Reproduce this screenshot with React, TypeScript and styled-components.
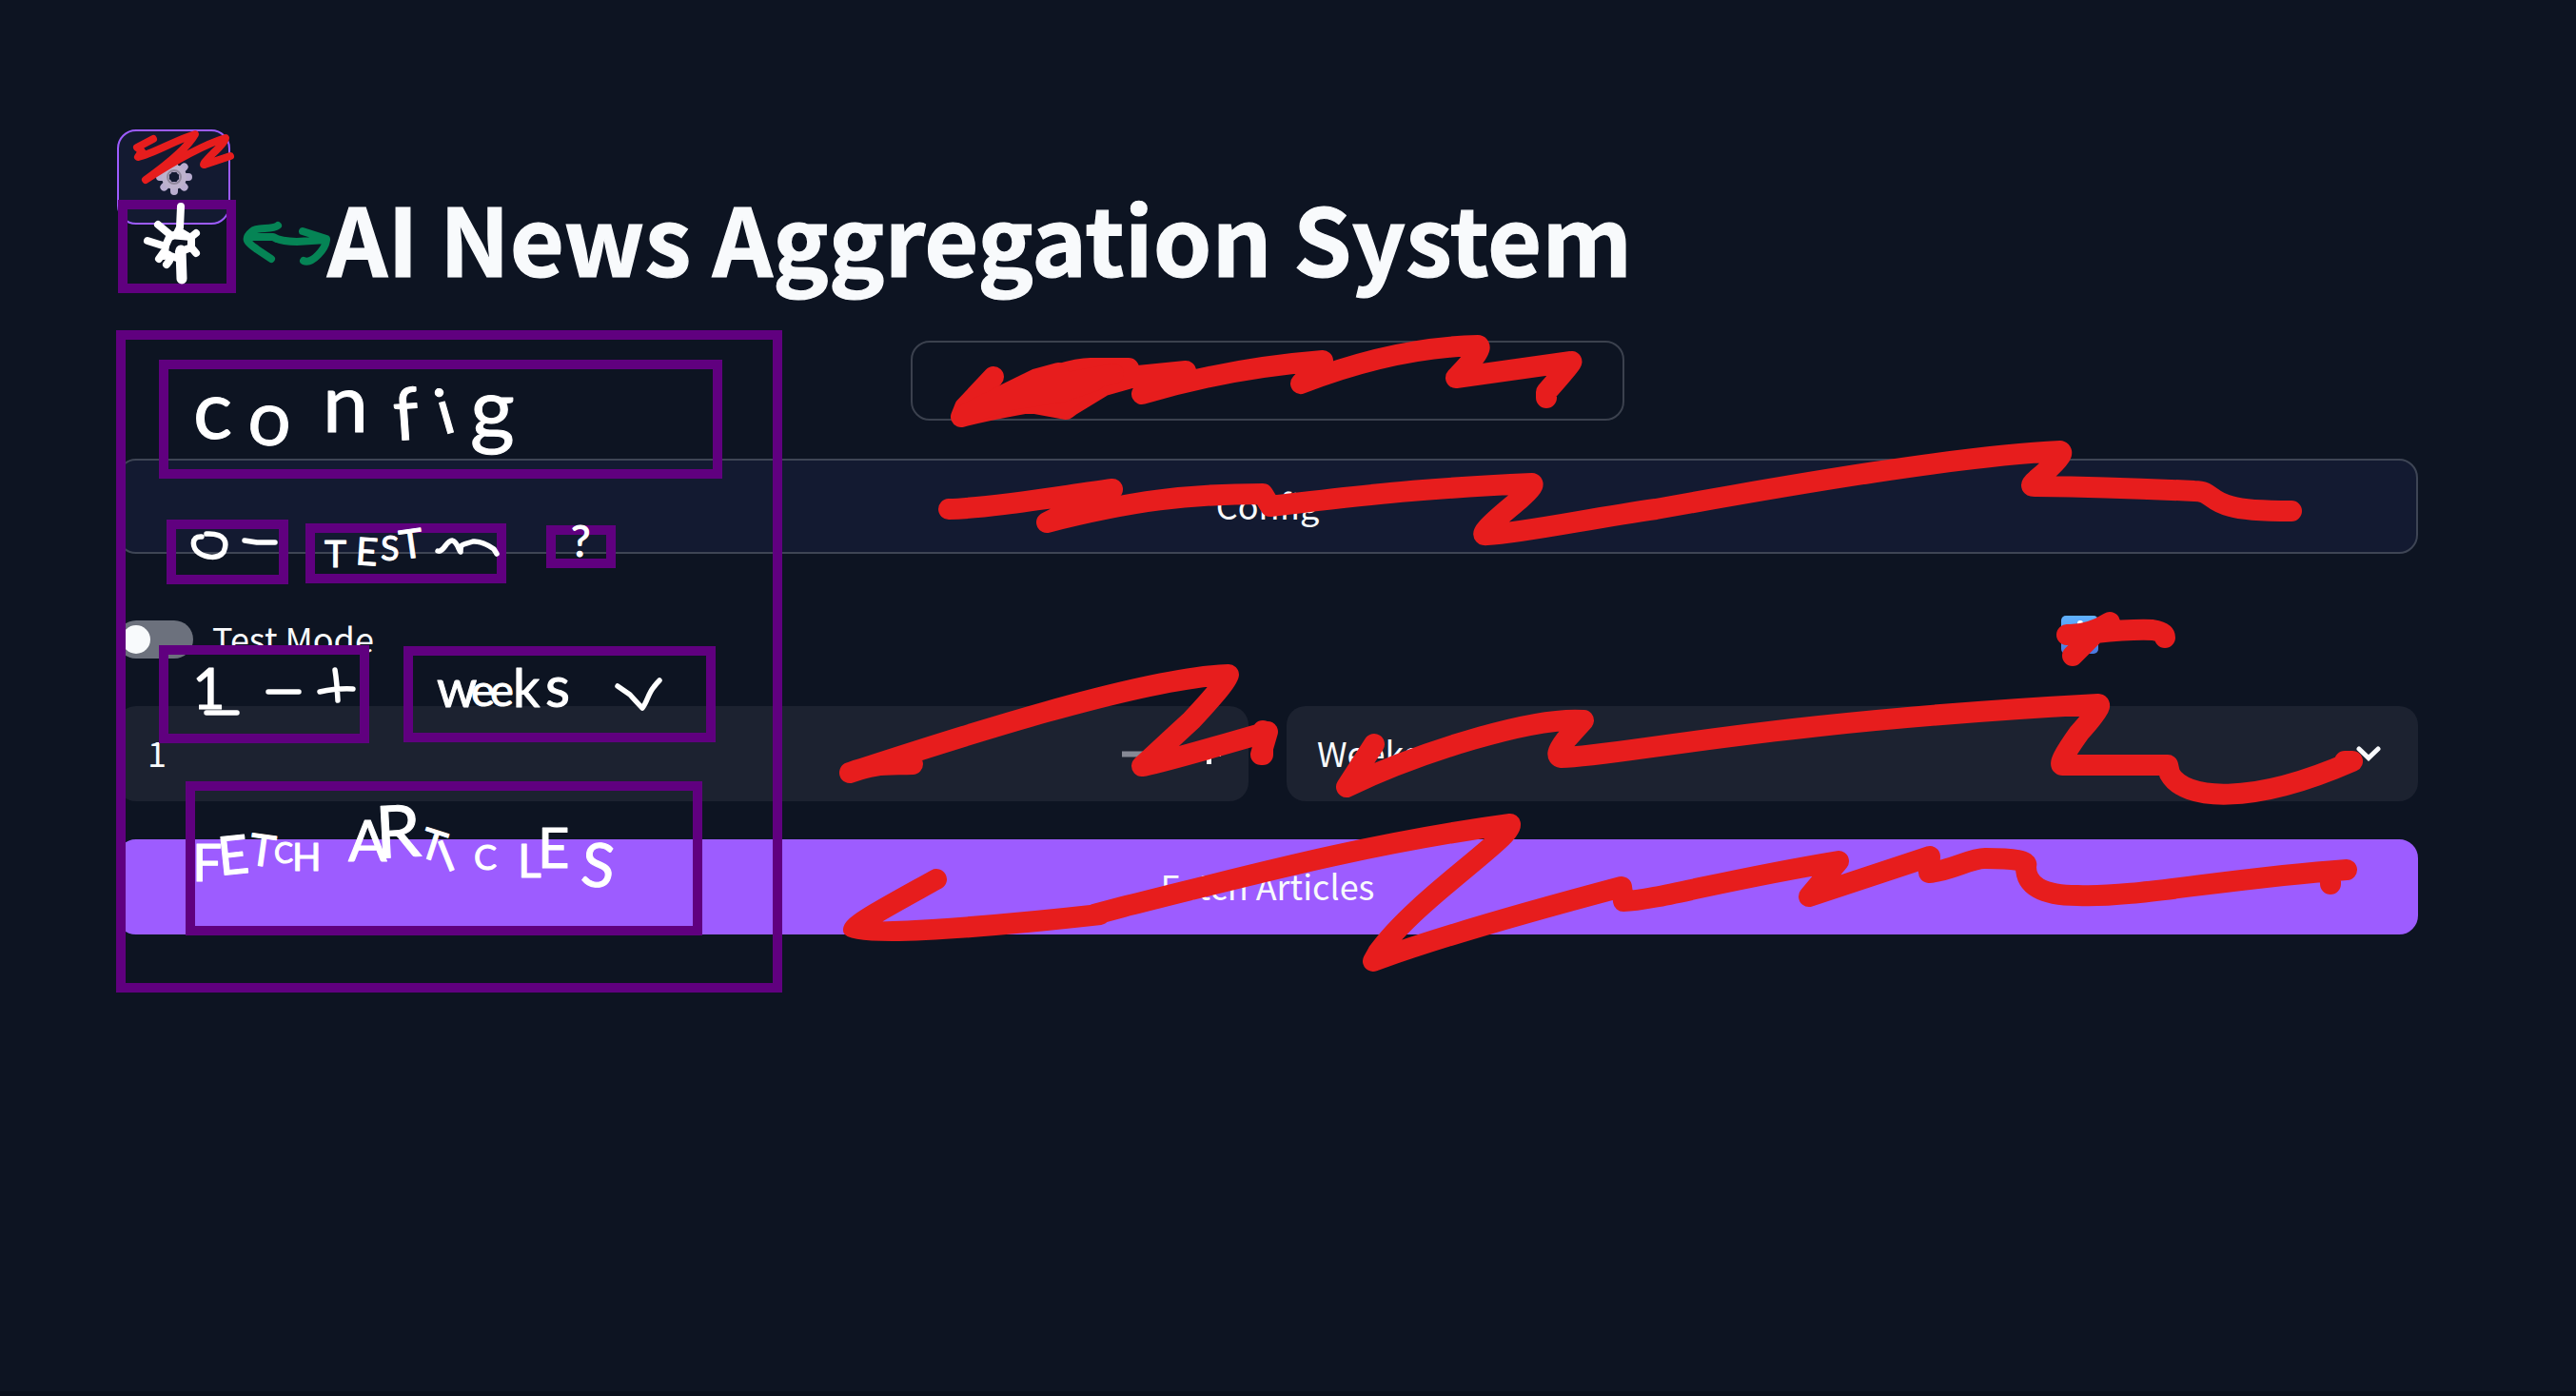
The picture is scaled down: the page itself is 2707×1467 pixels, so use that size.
import React from "react";
import styled, { createGlobalStyle } from "styled-components";

const colors = {
  page: "#0d1422",
  surface: "#131a31",
  field: "#1c2230",
  line: "#3e4555",
  accent: "#9d5cff",
  text: "#f8fafc",
  frame: "#60007f",
  red: "#e71d1d",
  green: "#058455",
};

const GlobalStyle = createGlobalStyle`
  * { box-sizing: border-box; }
  body {
    margin: 0;
    background: ${colors.page};
    color: ${colors.text};
    font-family: "Noto Sans CJK JP", "Noto Sans CJK SC", "Open Sans", sans-serif;
    font-size: 36px;
  }
`;

const Page = styled.main`
  position: relative;
  width: 2707px;
  height: 1467px;
  overflow: hidden;
  padding: 136px 166px 0 123px;
  background: ${colors.page};
  border-bottom: 5px solid #090f1b;
`;

const Header = styled.header`
  display: flex;
  align-items: flex-start;
  gap: 102px;
  height: 182px;
`;

const GearButton = styled.button`
  display: flex;
  align-items: center;
  justify-content: center;
  width: 119px;
  height: 100px;
  padding: 0;
  border: 2px solid ${colors.accent};
  border-radius: 20px;
  background: ${colors.surface};
`;

const Title = styled.h1`
  margin: 46px 0 0;
  font-size: 98.5px;
  font-weight: 700;
  line-height: 132px;
  white-space: nowrap;
  -webkit-text-stroke: 1.2px ${colors.text};
`;

const Stack = styled.section`
  display: flex;
  flex-direction: column;
  gap: 40px;
  margin-top: 40px;
`;

const Outline = styled.div`
  width: 750px;
  height: 84px;
  margin-left: 834px;
  border: 2px solid #3b414e;
  border-radius: 20px;
`;

const WideButton = styled.button<{ $primary?: boolean }>`
  display: flex;
  align-items: center;
  justify-content: center;
  width: 100%;
  height: 100px;
  padding: 0 0 4px;
  border: 2px solid ${(p) => (p.$primary ? colors.accent : colors.line)};
  border-radius: 20px;
  background: ${(p) => (p.$primary ? colors.accent : colors.surface)};
  color: ${colors.text};
  font: inherit;
  line-height: 50px;
`;

const ToggleRow = styled.div`
  display: flex;
  align-items: center;
  height: 80px;
`;

const Switch = styled.span`
  display: flex;
  align-items: center;
  width: 80px;
  height: 40px;
  padding: 0 5px;
  border-radius: 20px;
  background: #6c717d;
`;

const Knob = styled.span`
  width: 30px;
  height: 30px;
  border-radius: 50%;
  background: ${colors.text};
`;

const ToggleLabel = styled.span`
  margin-left: 20px;
  padding-bottom: 4px;
  line-height: 50px;
`;

const InfoTile = styled.span`
  display: flex;
  justify-content: center;
  width: 39px;
  height: 40px;
  margin: -10px 336px 0 auto;
  border-radius: 5px;
  background: linear-gradient(#60b2ff, #4b78df);
`;

const FieldRow = styled.div`
  display: grid;
  grid-template-columns: 1fr 1fr;
  gap: 40px;
`;

const Field = styled.div<{ $inset: number; $end: number }>`
  display: flex;
  align-items: center;
  justify-content: space-between;
  height: 100px;
  padding: 0 ${(p) => p.$end}px 0 ${(p) => p.$inset}px;
  border-radius: 20px;
  background: ${colors.field};
  line-height: 50px;
`;

const FieldValue = styled.span`
  padding-bottom: 4px;
`;

const Steps = styled.span`
  display: flex;
  gap: 54px;
`;

const Frame = styled.div<{ $box: [number, number, number, number] }>`
  position: absolute;
  left: ${(p) => p.$box[0]}px;
  top: ${(p) => p.$box[1]}px;
  width: ${(p) => p.$box[2]}px;
  height: ${(p) => p.$box[3]}px;
  border: 10px solid ${colors.frame};
`;

const Ink = styled.svg`
  position: absolute;
  inset: 0;
  fill: none;
  stroke-linecap: round;
  stroke-linejoin: round;
`;

const Note = styled.text`
  font-family: Lato, "Open Sans", sans-serif;
  font-weight: 400;
  fill: #fff;
  stroke: #fff;
  stroke-width: 1px;
`;

const frames: [number, number, number, number][] = [
  [122, 347, 700, 696],
  [124, 210, 124, 98],
  [167, 378, 592, 125],
  [175, 546, 128, 68],
  [321, 550, 211, 63],
  [574, 552, 73, 45],
  [167, 678, 221, 103],
  [424, 679, 328, 101],
  [195, 821, 543, 162],
];

// Each letter: glyph, x, baseline, size, tilt
type Letter = [string, number, number, number, number?];

const notes: Letter[][] = [
  [["c", 203, 461, 86], ["o", 259, 466, 80, 4], ["n", 339, 454, 86], ["f", 415, 463, 76, -4], ["i", 466, 457, 66, -16], ["g", 494, 461, 90]],
  [["T", 341, 596, 39], ["E", 373, 593, 40, 4], ["S", 400, 589, 36], ["T", 422, 588, 42, -8]],
  [["?", 600, 585, 46]],
  [["1", 202, 745, 60]],
  [["w", 459, 743, 54], ["e", 495, 742, 47], ["e", 515, 742, 47], ["k", 539, 743, 56], ["s", 573, 743, 60]],
  [
    ["F", 202, 926, 55], ["E", 231, 920, 56, -6], ["T", 260, 908, 46, 8], ["C", 288, 907, 30], ["H", 307, 915, 40],
    [" ", 350, 910, 20],
    ["A", 366, 905, 60], ["R", 396, 902, 76, -3], ["T", 438, 899, 44, 18], ["I", 469, 917, 46, -22],
    ["C", 498, 914, 36], ["L", 544, 922, 48], ["E", 565, 912, 58], ["S", 609, 930, 64, 6],
  ],
];

const redStrokes = [
  "M1044 396L1014 428L1010 438Q1050 428 1113 418L1060 416L1110 394Q1134 387 1146 387H1186Q1150 407 1120 430L1060 419M1130 405L1186 389M1122 428L1186 389M1150 408L1196 395L1246 390L1200 414Q1290 387 1390 379L1367 403Q1465 365 1553 363Q1561 365 1530 397Q1550 394 1651 380Q1655 378 1625 412V418",
  "M1014 436L1055 415L1090 398L1112 392M1030 430L1110 404L1170 393M1050 422L1115 412L1150 400",
  "M997 535C1040 534 1110 522 1169 514L1100 549C1190 526 1250 519 1327 519L1335 532C1430 521 1480 514 1610 508Q1614 510 1592 529Q1548 565 1563 562C1600 560 1670 545 1740 535C1890 508 2060 479 2165 474Q2172 477 2140 504Q2130 512 2140 511Q2220 512 2306 516C2324 516 2322 527 2344 532Q2360 537 2408 537",
  "M2217 654Q2195 668 2172 667M2178 689L2202 665Q2240 661 2262 662Q2275 664 2275 670",
  "M893 812C920 802 930 804 959 803M893 812C1000 777 1200 712 1291 709Q1291 715 1252 757L1200 805Q1215 803 1332 769L1325 793M1327 768V793",
  "M1444 782L1415 827C1490 791 1610 753 1664 757L1645 778Q1632 795 1641 796C1700 795 1850 759 2205 740Q2211 741 2185 770Q2160 805 2168 804H2278L2280 813C2295 841 2365 847 2472 800H2464",
  "M984 924C950 943 899 970 897 977C899 984 1030 975 1156 961H1150L1180 953C1290 926 1430 887 1587 866C1590 880 1488 945 1448 1001L1443 1010C1510 985 1610 957 1704 932L1706 947C1740 946 1810 925 1932 905L1901 942L2028 900L2027 917C2050 915 2070 902 2086 902Q2133 902 2129 910Q2128 941 2183 941C2240 944 2340 923 2466 914M2449 920V929",
];

const Cog = () => (
  <svg width="40" height="40" viewBox="-20 -20 40 40">
    <g stroke="#b9add0" strokeWidth="8" strokeLinecap="round">
      {[0, 45, 90, 135].map((a) => (
        <path key={a} d="M0-15V-9M0 9V15" transform={`rotate(${a})`} />
      ))}
    </g>
    <circle r="9.5" fill="none" stroke="#bdb2cd" strokeWidth="7" />
    <circle r="7" fill="none" stroke="#91899d" strokeWidth="2" />
  </svg>
);

export default function App() {
  return (
    <Page>
      <GlobalStyle />
      <Header>
        <GearButton aria-label="Settings"><Cog /></GearButton>
        <Title>AI News Aggregation System</Title>
      </Header>
      <Stack>
        <Outline />
        <WideButton>Config</WideButton>
      </Stack>
      <ToggleRow style={{ marginTop: 50 }}>
        <Switch><Knob /></Switch>
        <ToggleLabel>Test Mode</ToggleLabel>
        <InfoTile>
          <svg width="20" height="40"><circle cx="10" cy="8" r="3" fill="#fff" /><path d="M10 17V32" stroke="#fff" strokeWidth="5" /></svg>
        </InfoTile>
      </ToggleRow>
      <Stack style={{ marginTop: 30 }}>
        <FieldRow>
          <Field $inset={32} $end={29}>
            <FieldValue>1</FieldValue>
            <Steps>
              <svg width="25" height="25"><path d="M0 12.5H25" stroke="#868995" strokeWidth="6" /></svg>
              <svg width="25" height="25"><path d="M0 12.5H25M12.5 2V23" stroke={colors.text} strokeWidth="5" /></svg>
            </Steps>
          </Field>
          <Field $inset={32} $end={39}>
            <FieldValue>Weeks</FieldValue>
            <svg width="26" height="16" fill="none"><path d="M3 3L13 12.5L23 3" stroke={colors.text} strokeWidth="5" strokeLinecap="round" /></svg>
          </Field>
        </FieldRow>
        <WideButton $primary>Fetch Articles</WideButton>
      </Stack>

      {frames.map((box, i) => <Frame key={i} $box={box} />)}

      <Ink width="2707" height="1467" viewBox="0 0 2707 1467">
        <g stroke={colors.red} strokeWidth="22">
          {redStrokes.map((d) => <path key={d} d={d} />)}
        </g>
        <path stroke={colors.red} strokeWidth="8" d="M161 146L144 155L149 159L145 165C160 162 185 147 205 141Q195 159 153 189Q205 155 237 145Q237 149 224 161Q211 174 215 173L242 164" />
        <path stroke={colors.green} strokeWidth="8" d="M292 237C286 242 270 238 265 243C254 252 262 256 270 262L285 272M262 249H287Q295 254 312 254L343 252M318 243L343 251C343 261 328 278 319 274" />
        <path stroke="#fff" strokeWidth="8" d="M190 217L189 239L185 247M166 236L178 246M155 253L174 259L172 269M179 247L174 258L173 266M179 247L201 249L206 245M201 249V260L206 266M201 260L188 265M167 272L172 265L178 268M175 278L178 274M181 248L190 244L200 250M173 267L189 272" />
        <path stroke="#fff" strokeWidth="11" d="M190 263L191 293" />
        <g stroke="#fff" strokeWidth="5.5">
          <path d="M212 564C200 563 202 577 209 581C216 586 229 588 235 580C239 571 238 560 217 561M257 568L270 570H289" />
          <path d="M460 579C466 581 469 568 475 568C481 569 482 579 484 580C484 570 486 573 497 569Q506 568 519 577L522 582" />
          <path d="M217 749H249M282 727H314M336 727Q355 723 371 724M352 704Q354 716 355 736" />
          <path d="M649 721L662 730Q670 739 675 744C680 738 681 729 687 722Q690 718 693 715" />
        </g>
        {notes.map((letters, i) => (
          <Note key={i}>
            {letters.map(([glyph, x, y, size, tilt = 0], n) => (
              <tspan key={n} x={x} y={y} fontSize={size} rotate={tilt}>{glyph}</tspan>
            ))}
          </Note>
        ))}
      </Ink>
    </Page>
  );
}
